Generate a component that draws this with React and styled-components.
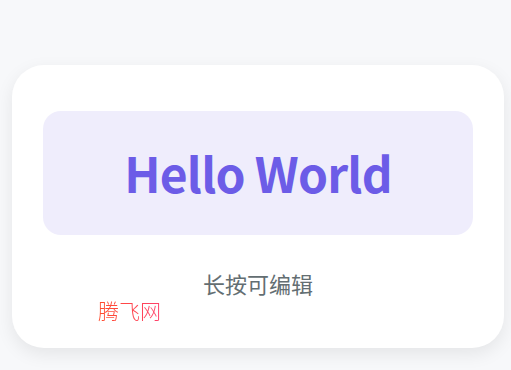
import React from 'react';
import styled, { createGlobalStyle } from 'styled-components';

const GlobalStyle = createGlobalStyle`
  html, body {
    margin: 0;
    padding: 0;
    background: #f7f8fa;
    font-family: "Noto Sans CJK SC", "Noto Sans", sans-serif;
  }
`;

const Page = styled.div`
  padding: 65px 7px 22px 12px;
`;

const Card = styled.div`
  position: relative;
  background: #ffffff;
  border-radius: 32px;
  box-shadow: 0 6px 18px rgba(0, 0, 0, 0.08);
  padding: 46px 31px 0;
  height: 283px;
  box-sizing: border-box;
  display: flex;
  flex-direction: column;
  align-items: stretch;
`;

const TextBox = styled.div`
  height: 124px;
  border-radius: 18px;
  background: #efedfc;
  display: flex;
  align-items: center;
  justify-content: center;
`;

const Title = styled.h1`
  margin: 0 0 2px;
  font-size: 48px;
  font-weight: 700;
  letter-spacing: -0.8px;
  color: #6c5ce7;
  line-height: 1;
`;

const Hint = styled.p`
  margin: 34px 0 0;
  text-align: center;
  font-size: 22px;
  line-height: 28px;
  color: #636e72;
`;

const Watermark = styled.span`
  position: absolute;
  left: 86px;
  top: 233px;
  font-size: 21px;
  font-weight: 300;
  line-height: 24px;
  background: linear-gradient(90deg, #ff4b2b, #ff416c);
  -webkit-background-clip: text;
  background-clip: text;
  color: transparent;
  pointer-events: none;
`;

const App = () => {
  return (
    <>
      <GlobalStyle />
      <Page>
        <Card>
          <TextBox>
            <Title>Hello World</Title>
          </TextBox>
          <Hint>长按可编辑</Hint>
          <Watermark>腾飞网</Watermark>
        </Card>
      </Page>
    </>
  );
};

export default App;
